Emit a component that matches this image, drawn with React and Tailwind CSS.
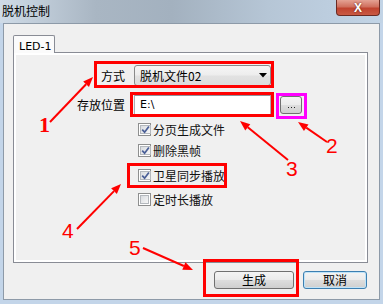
import React from 'react'

const cjk = { fontFamily: '"Noto Sans CJK SC", "Liberation Sans", sans-serif' }

function Check({ checked }) {
  return (
    <span className="w-[13px] h-[13px] shrink-0 border border-[#8e8f8f] bg-white p-px flex">
      <span className="flex-1 border border-[#b4b8bd] bg-[linear-gradient(135deg,#d9dce0,#f7f7f7)] flex items-center justify-center">
        {checked && (
          <svg width="9" height="9" viewBox="0 0 9 9">
            <path d="M1.2 4.6 L3.6 7.2 L7.9 1.4" stroke="#4a5f97" strokeWidth="1.7" fill="none" />
          </svg>
        )}
      </span>
    </span>
  )
}

function CheckRow({ checked, label, className }) {
  return (
    <div className={`flex items-center gap-[2px] h-[13px] ${className}`}>
      <Check checked={checked} />
      <span className="text-[12px] leading-none text-[#111]">{label}</span>
    </div>
  )
}

function Arrow({ x1, y1, x2, y2 }) {
  const dx = x2 - x1
  const dy = y2 - y1
  const len = Math.hypot(dx, dy)
  const ux = dx / len
  const uy = dy / len
  const hl = 10
  const hw = 4
  const bx = x2 - ux * hl
  const by = y2 - uy * hl
  const pts = `${x2},${y2} ${bx - uy * hw},${by + ux * hw} ${bx + uy * hw},${by - ux * hw}`
  return (
    <g>
      <line x1={x1} y1={y1} x2={bx} y2={by} stroke="#ff0000" strokeWidth="2" />
      <polygon points={pts} fill="#ff0000" />
    </g>
  )
}

const btn =
  'h-[18px] rounded-[3px] border text-[12px] leading-none flex items-center justify-center bg-[linear-gradient(to_bottom,#f4f4f4_0%,#ebebeb_48%,#dddddd_52%,#cfcfcf_100%)]'

export default function App() {
  return (
    <div className="relative w-[383px] h-[304px] overflow-hidden bg-[#c3d5e9]" style={cjk}>
      {/* title bar */}
      <div className="h-[23px] flex justify-between bg-[linear-gradient(to_right,#cfdbe7_0%,#a9b6c3_25%,#a3b1bf_45%,#b6c6d6_70%,#c2d4e6_100%)]">
        <span className="pl-[2px] pt-[5px] text-[12px] leading-none text-black">脱机控制</span>
        <div className="mr-[3px] w-[44px] h-[16px] rounded-b-[4px] border border-t-0 border-[#6b2a22] bg-[linear-gradient(to_bottom,#e4a294_0%,#d0705e_45%,#c0432f_55%,#c95a44_100%)] flex items-center justify-center">
          <span className="text-white text-[12px] font-bold leading-none" style={{ fontFamily: '"Liberation Sans", sans-serif', textShadow: '0 0 2px #5a1a10' }}>X</span>
        </div>
      </div>

      {/* client */}
      <div className="mx-[3px] h-[277px] border border-[#8d9aa8] bg-[#f0f0f0] pt-[11px]">
        <div className="ml-[9px] w-[355px]">
          <div className="relative z-10 w-[42px] h-[18px] -mb-px border border-b-0 border-[#898c95] bg-[#fbfbfb] rounded-t-[2px] pl-[5px] pt-[5px] text-[11px] leading-none" style={{ fontFamily: '"DejaVu Sans", sans-serif' }}>
            LED-1
          </div>
          <div className="h-[211px] border border-[#898c95] bg-[#f0f0f0] shadow-[inset_0_0_0_2px_#ffffff] pt-[12px]">
            {/* row 1 */}
            <div className="flex items-center h-[21px]">
              <span className="w-[111px] text-right text-[12px] leading-none">方式</span>
              <div className="ml-[9px] w-[137px] h-[21px] rounded-[3px] border border-[#8a8a8a] bg-[linear-gradient(to_bottom,#f6f6f6_0%,#ededed_48%,#e2e2e2_52%,#dcdcdc_100%)] flex items-center justify-between pl-[5px] pr-[3px]">
                <span className="text-[12px] leading-none">脱机文件02</span>
                <svg width="8" height="5" viewBox="0 0 8 5"><polygon points="0,0 8,0 4,4.5" fill="#000" /></svg>
              </div>
            </div>
            {/* row 2 */}
            <div className="flex items-center h-[21px] mt-[8px]">
              <span className="w-[111px] text-right text-[12px] leading-none">存放位置</span>
              <div className="ml-[9px] w-[137px] h-[20px] border border-[#abadb3] border-t-[#8e939b] bg-white flex items-center pl-[5px]">
                <span className="text-[11px] leading-none" style={{ fontFamily: '"DejaVu Sans", sans-serif' }}>E:\</span>
              </div>
              <div className={`${btn} ml-[9px] w-[22px] border-[#707070]`}>
                <span className="flex gap-[2px] mt-[5px]">
                  <span className="w-px h-px bg-[#222]" />
                  <span className="w-px h-px bg-[#222]" />
                  <span className="w-px h-px bg-[#222]" />
                </span>
              </div>
            </div>
            {/* checkboxes */}
            <div className="ml-[124px]">
              <CheckRow checked label="分页生成文件" className="mt-[8px]" />
              <CheckRow checked label="删除黑帧" className="mt-[8px]" />
              <CheckRow checked label="卫星同步播放" className="mt-[12px]" />
              <CheckRow label="定时长播放" className="mt-[11px]" />
            </div>
          </div>
        </div>
        {/* buttons */}
        <div className="flex justify-end gap-[9px] pr-[12px] mt-[8px]">
          <div className={`${btn} w-[80px] border-[#707070]`}>生成</div>
          <div className={`${btn} w-[64px] border-[#3c7fb1] shadow-[inset_0_0_0_1px_#bfe3f8]`}>取消</div>
        </div>
      </div>

      {/* annotations */}
      <div className="absolute left-[94px] top-[61px] w-[180px] h-[27px] border-[3px] border-[#ff0000]" />
      <div className="absolute left-[130px] top-[92px] w-[144px] h-[25px] border-[3px] border-[#ff0000]" />
      <div className="absolute left-[276px] top-[93px] w-[31px] h-[26px] border-[3px] border-[#ff00ff]" />
      <div className="absolute left-[127px] top-[163px] w-[100px] h-[25px] border-[3px] border-[#ff0000]" />
      <div className="absolute left-[203px] top-[259px] w-[96px] h-[38px] border-[3px] border-[#ff0000]" />

      <svg className="absolute inset-0 pointer-events-none" width="383" height="304">
        <Arrow x1={50} y1={122} x2={93} y2={77} />
        <Arrow x1={327} y1={142} x2={298} y2={122} />
        <Arrow x1={288} y1={160} x2={240} y2={121} />
        <Arrow x1={77} y1={229} x2={121} y2={184} />
        <Arrow x1={143} y1={248} x2={193} y2={270} />
      </svg>

      <span className="absolute left-[39px] top-[114px] text-[22px] font-bold leading-none text-[#ff0000]" style={{ fontFamily: '"Liberation Serif", serif' }}>1</span>
      <span className="absolute left-[326px] top-[135px] text-[21px] leading-none text-[#ff0000]" style={{ fontFamily: '"Liberation Sans", sans-serif' }}>2</span>
      <span className="absolute left-[286px] top-[158px] text-[21px] leading-none text-[#ff0000]" style={{ fontFamily: '"Liberation Sans", sans-serif' }}>3</span>
      <span className="absolute left-[62px] top-[220px] text-[21px] leading-none text-[#ff0000]" style={{ fontFamily: '"Liberation Sans", sans-serif' }}>4</span>
      <span className="absolute left-[129px] top-[237px] text-[21px] leading-none text-[#ff0000]" style={{ fontFamily: '"Liberation Sans", sans-serif' }}>5</span>
    </div>
  )
}
